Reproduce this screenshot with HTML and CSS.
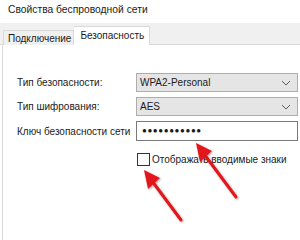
FILE: index.html
```html
<!DOCTYPE html>
<html lang="ru">
<head>
  <meta charset="UTF-8">
  <title>Свойства беспроводной сети</title>
  <link rel="stylesheet" href="styles.css">
</head>
<body>
  <div class="window">
    <div class="title">Свойства беспроводной сети</div>

    <div class="tabs">
      <div class="tab">Подключение</div>
      <div class="tab active">Безопасность</div>
    </div>

    <div class="panel">
      <div class="row">
        <span class="label">Тип безопасности:</span>
        <div class="select"><span>WPA2-Personal</span><svg width="10" height="6" viewBox="0 0 10 6"><path d="M1 1 L5 5 L9 1" fill="none" stroke="#606060" stroke-width="1"/></svg></div>
      </div>
      <div class="row">
        <span class="label">Тип шифрования:</span>
        <div class="select"><span>AES</span><svg width="10" height="6" viewBox="0 0 10 6"><path d="M1 1 L5 5 L9 1" fill="none" stroke="#606060" stroke-width="1"/></svg></div>
      </div>
      <div class="row">
        <span class="label">Ключ безопасности сети</span>
        <div class="input">●●●●●●●●●●●</div>
      </div>
      <div class="row check-row">
        <span class="label"></span>
        <label class="check"><span class="box"></span>Отображать вводимые знаки</label>
      </div>
    </div>

    <svg class="arrows" width="300" height="240" viewBox="0 0 300 240">
      <defs>
        <filter id="shadow" x="-20%" y="-20%" width="140%" height="140%">
          <feDropShadow dx="1" dy="1" stdDeviation="1" flood-color="#000" flood-opacity="0.35"/>
        </filter>
      </defs>
      <g filter="url(#shadow)" fill="#e3151a" stroke="#e3151a">
        <line x1="236" y1="197" x2="204" y2="154" stroke-width="3" stroke-linecap="round"/>
        <polygon points="196,143 212,151 200,162" stroke="none"/>
        <line x1="181" y1="220" x2="152" y2="181" stroke-width="3" stroke-linecap="round"/>
        <polygon points="144,170 160,178 148,189" stroke="none"/>
      </g>
    </svg>
  </div>
</body>
</html>
```

FILE: styles.css
```css
body {
  margin: 0;
  font-family: "Liberation Sans", Arial, sans-serif;
  font-size: 10px;
  color: #1a1a1a;
  background: #fff;
}
.window {
  position: relative;
  width: 300px;
  height: 240px;
  overflow: hidden;
}
.title {
  height: 23px;
  padding-left: 8px;
  line-height: 19px;
  font-size: 10.3px;
}
.tabs {
  display: flex;
  align-items: flex-end;
  height: 21px;
  padding-left: 3px;
  background: #f0f0f0;
  border-bottom: 1px solid #d9d9d9;
}
.tab {
  height: 14px;
  padding: 0 2px 0 4px;
  line-height: 16px;
  white-space: nowrap;
  background: #f0f0f0;
  border: 1px solid #d9d9d9;
  border-bottom: none;
  margin-bottom: -1px;
}
.tab.active {
  position: relative;
  z-index: 1;
  height: 18px;
  padding: 0 5px 0 6px;
  line-height: 17px;
  background: #fff;
  border-left: none;
}
.panel {
  margin-left: 2px;
  border-left: 1px solid #d9d9d9;
  height: 200px;
  padding: 28px 0 0 14px;
}
.row {
  display: flex;
  align-items: center;
  margin-bottom: 5px;
}
.label {
  width: 119px;
  flex: none;
  white-space: nowrap;
}
.select {
  display: flex;
  align-items: center;
  justify-content: space-between;
  box-sizing: border-box;
  width: 162px;
  height: 19px;
  padding: 0 6px 0 3px;
  background: #e5e5e5;
  border: 1px solid #adadad;
}
.input {
  box-sizing: border-box;
  width: 162px;
  height: 20px;
  padding-left: 5px;
  line-height: 18px;
  border: 1px solid #7a7a7a;
  font-size: 8px;
  letter-spacing: 0.6px;
}
.check-row {
  margin-top: 12px;
}
.check {
  display: flex;
  align-items: center;
  gap: 2px;
  margin-left: 1px;
  white-space: nowrap;
}
.box {
  width: 11px;
  height: 11px;
  border: 1px solid #333;
  background: #fff;
}
.arrows {
  position: absolute;
  left: 0;
  top: 0;
}
```
